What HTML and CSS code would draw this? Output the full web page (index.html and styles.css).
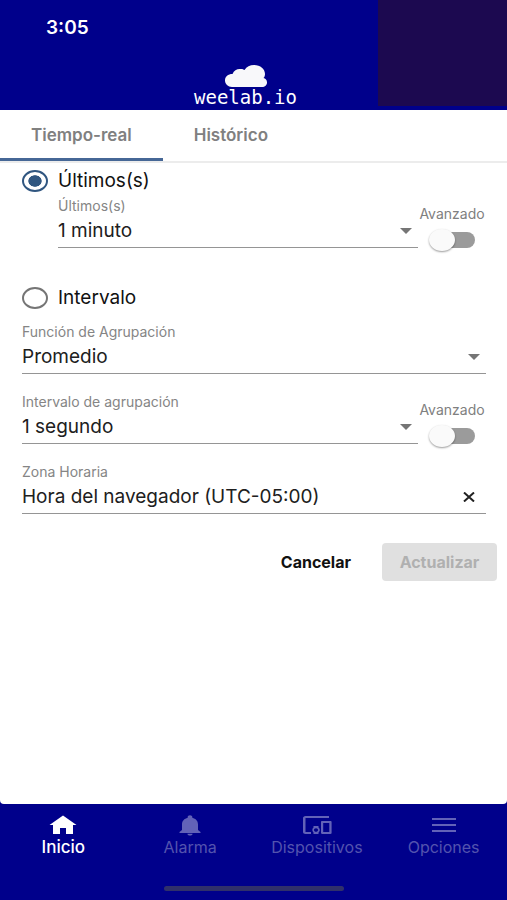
FILE: index.html
```html
<!DOCTYPE html>
<html lang="es">
<head>
  <meta charset="UTF-8" />
  <meta name="viewport" content="width=device-width, initial-scale=1" />
  <title>weelab.io</title>
  <link rel="stylesheet" href="styles.css">
</head>
<body>
  <header class="header">
    <div class="clock">3:05</div>
    <div class="brand">
      <svg class="brand-cloud" viewBox="0 0 42 22" aria-hidden="true">
        <path d="M7 22C3 22 0 19 0 15.500C0 11.500 3 9 7.500 9C9 5 12.500 3.500 16 4C17.500 4 18.500 4.500 19.500 5C21.500 1.500 25 0 29 0C35.500 0 40 4 40 9C40 10.500 39.500 12 38.500 13C40.500 13.500 42 15 42 17.500C42 20 40 22 37 22Z"/>
      </svg>
      <span class="brand-name">weelab.io</span>
    </div>
  </header>

  <div class="tabs" role="tablist">
    <button class="tab active" type="button" role="tab" aria-selected="true">Tiempo-real</button>
    <button class="tab" type="button" role="tab" aria-selected="false">Histórico</button>
  </div>

  <main class="sheet">
    <form class="form">
      <label class="radio-row">
        <input type="radio" name="mode" checked />
        <span>Últimos(s)</span>
      </label>

      <div class="row indented">
        <div class="field">
          <label for="last">Últimos(s)</label>
          <div class="control">
            <select id="last"><option>1 minuto</option></select>
            <svg class="arrow" viewBox="0 0 12 6" aria-hidden="true"><path d="M0 0h12L6 6z"/></svg>
          </div>
        </div>
        <label class="switch">
          <span>Avanzado</span>
          <input type="checkbox" />
        </label>
      </div>

      <label class="radio-row second">
        <input type="radio" name="mode" />
        <span>Intervalo</span>
      </label>

      <div class="fields">
        <div class="field">
          <label for="func">Función de Agrupación</label>
          <div class="control">
            <select id="func"><option>Promedio</option></select>
            <svg class="arrow" viewBox="0 0 12 6" aria-hidden="true"><path d="M0 0h12L6 6z"/></svg>
          </div>
        </div>

        <div class="row">
          <div class="field">
            <label for="group">Intervalo de agrupación</label>
            <div class="control">
              <select id="group"><option>1 segundo</option></select>
              <svg class="arrow" viewBox="0 0 12 6" aria-hidden="true"><path d="M0 0h12L6 6z"/></svg>
            </div>
          </div>
          <label class="switch">
            <span>Avanzado</span>
            <input type="checkbox" />
          </label>
        </div>

        <div class="field">
          <label for="zone">Zona Horaria</label>
          <div class="control">
            <input class="text" id="zone" type="text" value="Hora del navegador (UTC-05:00)" />
            <button class="clear" type="button" aria-label="Borrar">
              <svg viewBox="0 0 12 10" aria-hidden="true"><path d="M1 0.500L11 9.500M11 0.500L1 9.500"/></svg>
            </button>
          </div>
        </div>
      </div>

      <div class="actions">
        <button class="btn" type="button">Cancelar</button>
        <button class="btn update" type="submit" disabled>Actualizar</button>
      </div>
    </form>
  </main>

  <footer class="bottom">
    <nav class="nav">
      <a class="nav-item active" href="#">
        <svg viewBox="0 0 28 20" aria-hidden="true"><path d="M11 19V13h6v6h7v-9h3.500L14 0.500L0.500 10H4v9z"/></svg>
        <span>Inicio</span>
      </a>
      <a class="nav-item" href="#">
        <svg viewBox="0 0 28 20" aria-hidden="true"><path d="M14 20.500c1.500 0 2.600-.8 2.600-1.800h-5.200c0 1 1.100 1.800 2.600 1.800zM22 15V9.500c0-3.500-2.200-6-5.700-6.800V2c0-1-1-1.800-2.300-1.800S11.700 1 11.700 2v.7C8.200 3.500 6 6 6 9.500V15l-2.500 2v1h21v-1z"/></svg>
        <span>Alarma</span>
      </a>
      <a class="nav-item" href="#">
        <svg viewBox="0 0 28 20" aria-hidden="true"><path d="M2.500 3H26V1H2.500C1 1 0 2 0 3v14c0 1 1 2 2.500 2H8v-2H2.500zM15.500 11h-5v1.600c-.8.6-1.200 1.400-1.200 2.400s.4 1.800 1.200 2.400V19h5v-1.600c.8-.6 1.300-1.400 1.300-2.400s-.5-1.800-1.300-2.400zM13 16.800c-1.200 0-2-.8-2-1.800s.8-1.800 2-1.800 2 .8 2 1.800-.8 1.800-2 1.800zM27.500 6H19c-.5 0-1 .4-1 .9v11.200c0 .5.500.9 1 .9h8.500c.6 0 1.100-.4 1.100-.9V6.900c0-.5-.5-.9-1.100-.9zM26.300 17H20.200V8h6.100z"/></svg>
        <span>Dispositivos</span>
      </a>
      <a class="nav-item" href="#">
        <svg viewBox="0 0 28 20" aria-hidden="true"><path d="M2 3h24v2H2zM2 9h24v2H2zM2 15h24v2H2z"/></svg>
        <span>Opciones</span>
      </a>
    </nav>
    <div class="home-bar"></div>
  </footer>
</body>
</html>
```
FILE: styles.css
```css
* {
  box-sizing: border-box;
}

body {
  margin: 0;
  min-height: 100vh;
  display: flex;
  flex-direction: column;
  background: #00008b;
  color: #202020;
  font-family: Inter, Roboto, sans-serif;
}

button, select, input {
  font-family: inherit;
  margin: 0;
  padding: 0;
  border: 0;
  background: none;
  color: inherit;
}

/* header */
.header {
  position: relative;
  height: 110px;
  padding-top: 16px;
  color: #fff;
}
.header::after {
  content: "";
  position: absolute;
  top: 0;
  right: 0;
  width: 129px;
  height: 106px;
  background: #1c0950;
}
.clock {
  padding-left: 46px;
  font-size: 19px;
  line-height: 24px;
  font-weight: 600;
}
.brand {
  display: flex;
  flex-direction: column;
  align-items: center;
  padding-top: 25px;
  padding-right: 16px;
}
.brand-cloud {
  width: 42px;
  height: 22px;
  fill: #f8f8fa;
}
.brand-name {
  font-family: "DejaVu Sans Mono", monospace;
  font-size: 19px;
  line-height: 20px;
}

/* tabs */
.tabs {
  display: flex;
  height: 53px;
  background: #fff;
  border-bottom: 2px solid #ececec;
}
.tab {
  padding: 2px 31px 0;
  color: #808080;
  font-size: 17px;
  font-weight: 600;
  border-bottom: 3px solid transparent;
}
.tab.active {
  border-bottom-color: #466796;
}

/* form */
.sheet {
  flex: 1;
  background: #fff;
  border-radius: 0 0 4px 4px;
}
.form {
  padding: 1px 21px 0 22px;
}
.radio-row {
  display: flex;
  align-items: center;
  gap: 10px;
  height: 34px;
  font-size: 19px;
  line-height: 24px;
  color: #111;
}
.radio-row.second {
  margin-top: 33px;
  margin-bottom: 9px;
}
.radio-row input {
  appearance: none;
  width: 26px;
  height: 22px;
  border: 2px solid #757575;
  border-radius: 50%;
}
.radio-row input:checked {
  border-color: #305680;
  background: radial-gradient(7px 6px, #305680 90%, #fff);
}
.row {
  display: flex;
  height: 50px;
}
.row.indented {
  padding-left: 36px;
}
.fields {
  display: flex;
  flex-direction: column;
  gap: 20px;
}
.field {
  flex: 1;
  min-width: 0;
}
.field label {
  display: block;
  font-size: 14px;
  line-height: 16px;
  color: #858585;
}
.control {
  display: flex;
  align-items: center;
  height: 34px;
  border-bottom: 1px solid #959595;
}
.control select, .text {
  appearance: none;
  flex: 1;
  min-width: 0;
  height: 32px;
  font-size: 19px;
  line-height: 24px;
  outline: 0;
}
.arrow {
  width: 12px;
  height: 6px;
  margin-right: 6px;
  fill: #757575;
}
.clear {
  display: flex;
  margin-right: 11px;
}
.clear svg {
  width: 12px;
  height: 10px;
  fill: none;
  stroke: #222;
  stroke-width: 2;
}
.switch {
  display: flex;
  flex-direction: column;
  align-items: center;
  gap: 7px;
  width: 68px;
  padding-top: 8px;
  font-size: 14px;
  line-height: 16px;
  color: #808080;
}
.switch input {
  appearance: none;
  flex: none;
  position: relative;
  width: 46px;
  height: 22px;
}
.switch input::before {
  content: "";
  position: absolute;
  inset: 3px 0 3px 4px;
  border-radius: 8px;
  background: #9b9b9b;
}
.switch input::after {
  content: "";
  position: absolute;
  top: 0;
  left: 0;
  width: 26px;
  height: 22px;
  border-radius: 50%;
  background: #fafafa;
  box-shadow: 0 1px 2px rgba(0, 0, 0, 0.4);
}
.actions {
  display: flex;
  justify-content: flex-end;
  margin: 29px -11px 20px 0;
}
.btn {
  height: 38px;
  padding: 0 16px;
  font-size: 16px;
  font-weight: 700;
  color: #111;
}
.btn.update {
  min-width: 115px;
  margin-left: 15px;
  border-radius: 4px;
  background: #e0e0e0;
  color: #b0b0b0;
}

/* bottom navigation */
.bottom {
  height: 96px;
  display: flex;
  flex-direction: column;
  justify-content: space-between;
  padding: 11px 0 9px;
}
.nav {
  display: flex;
}
.nav-item {
  flex: 1 1 0;
  display: flex;
  flex-direction: column;
  align-items: center;
  gap: 2px;
  color: #5353ae;
  font-size: 16px;
  line-height: 20px;
  text-decoration: none;
}
.nav-item svg {
  width: 28px;
  height: 20px;
  fill: #6262b8;
  overflow: visible;
}
.nav-item.active {
  color: #fff;
  font-size: 17px;
  font-weight: 500;
}
.nav-item.active svg {
  fill: #fff;
}
.home-bar {
  width: 180px;
  height: 5px;
  margin: 0 auto;
  border-radius: 3px;
  background: #30306a;
}
```
